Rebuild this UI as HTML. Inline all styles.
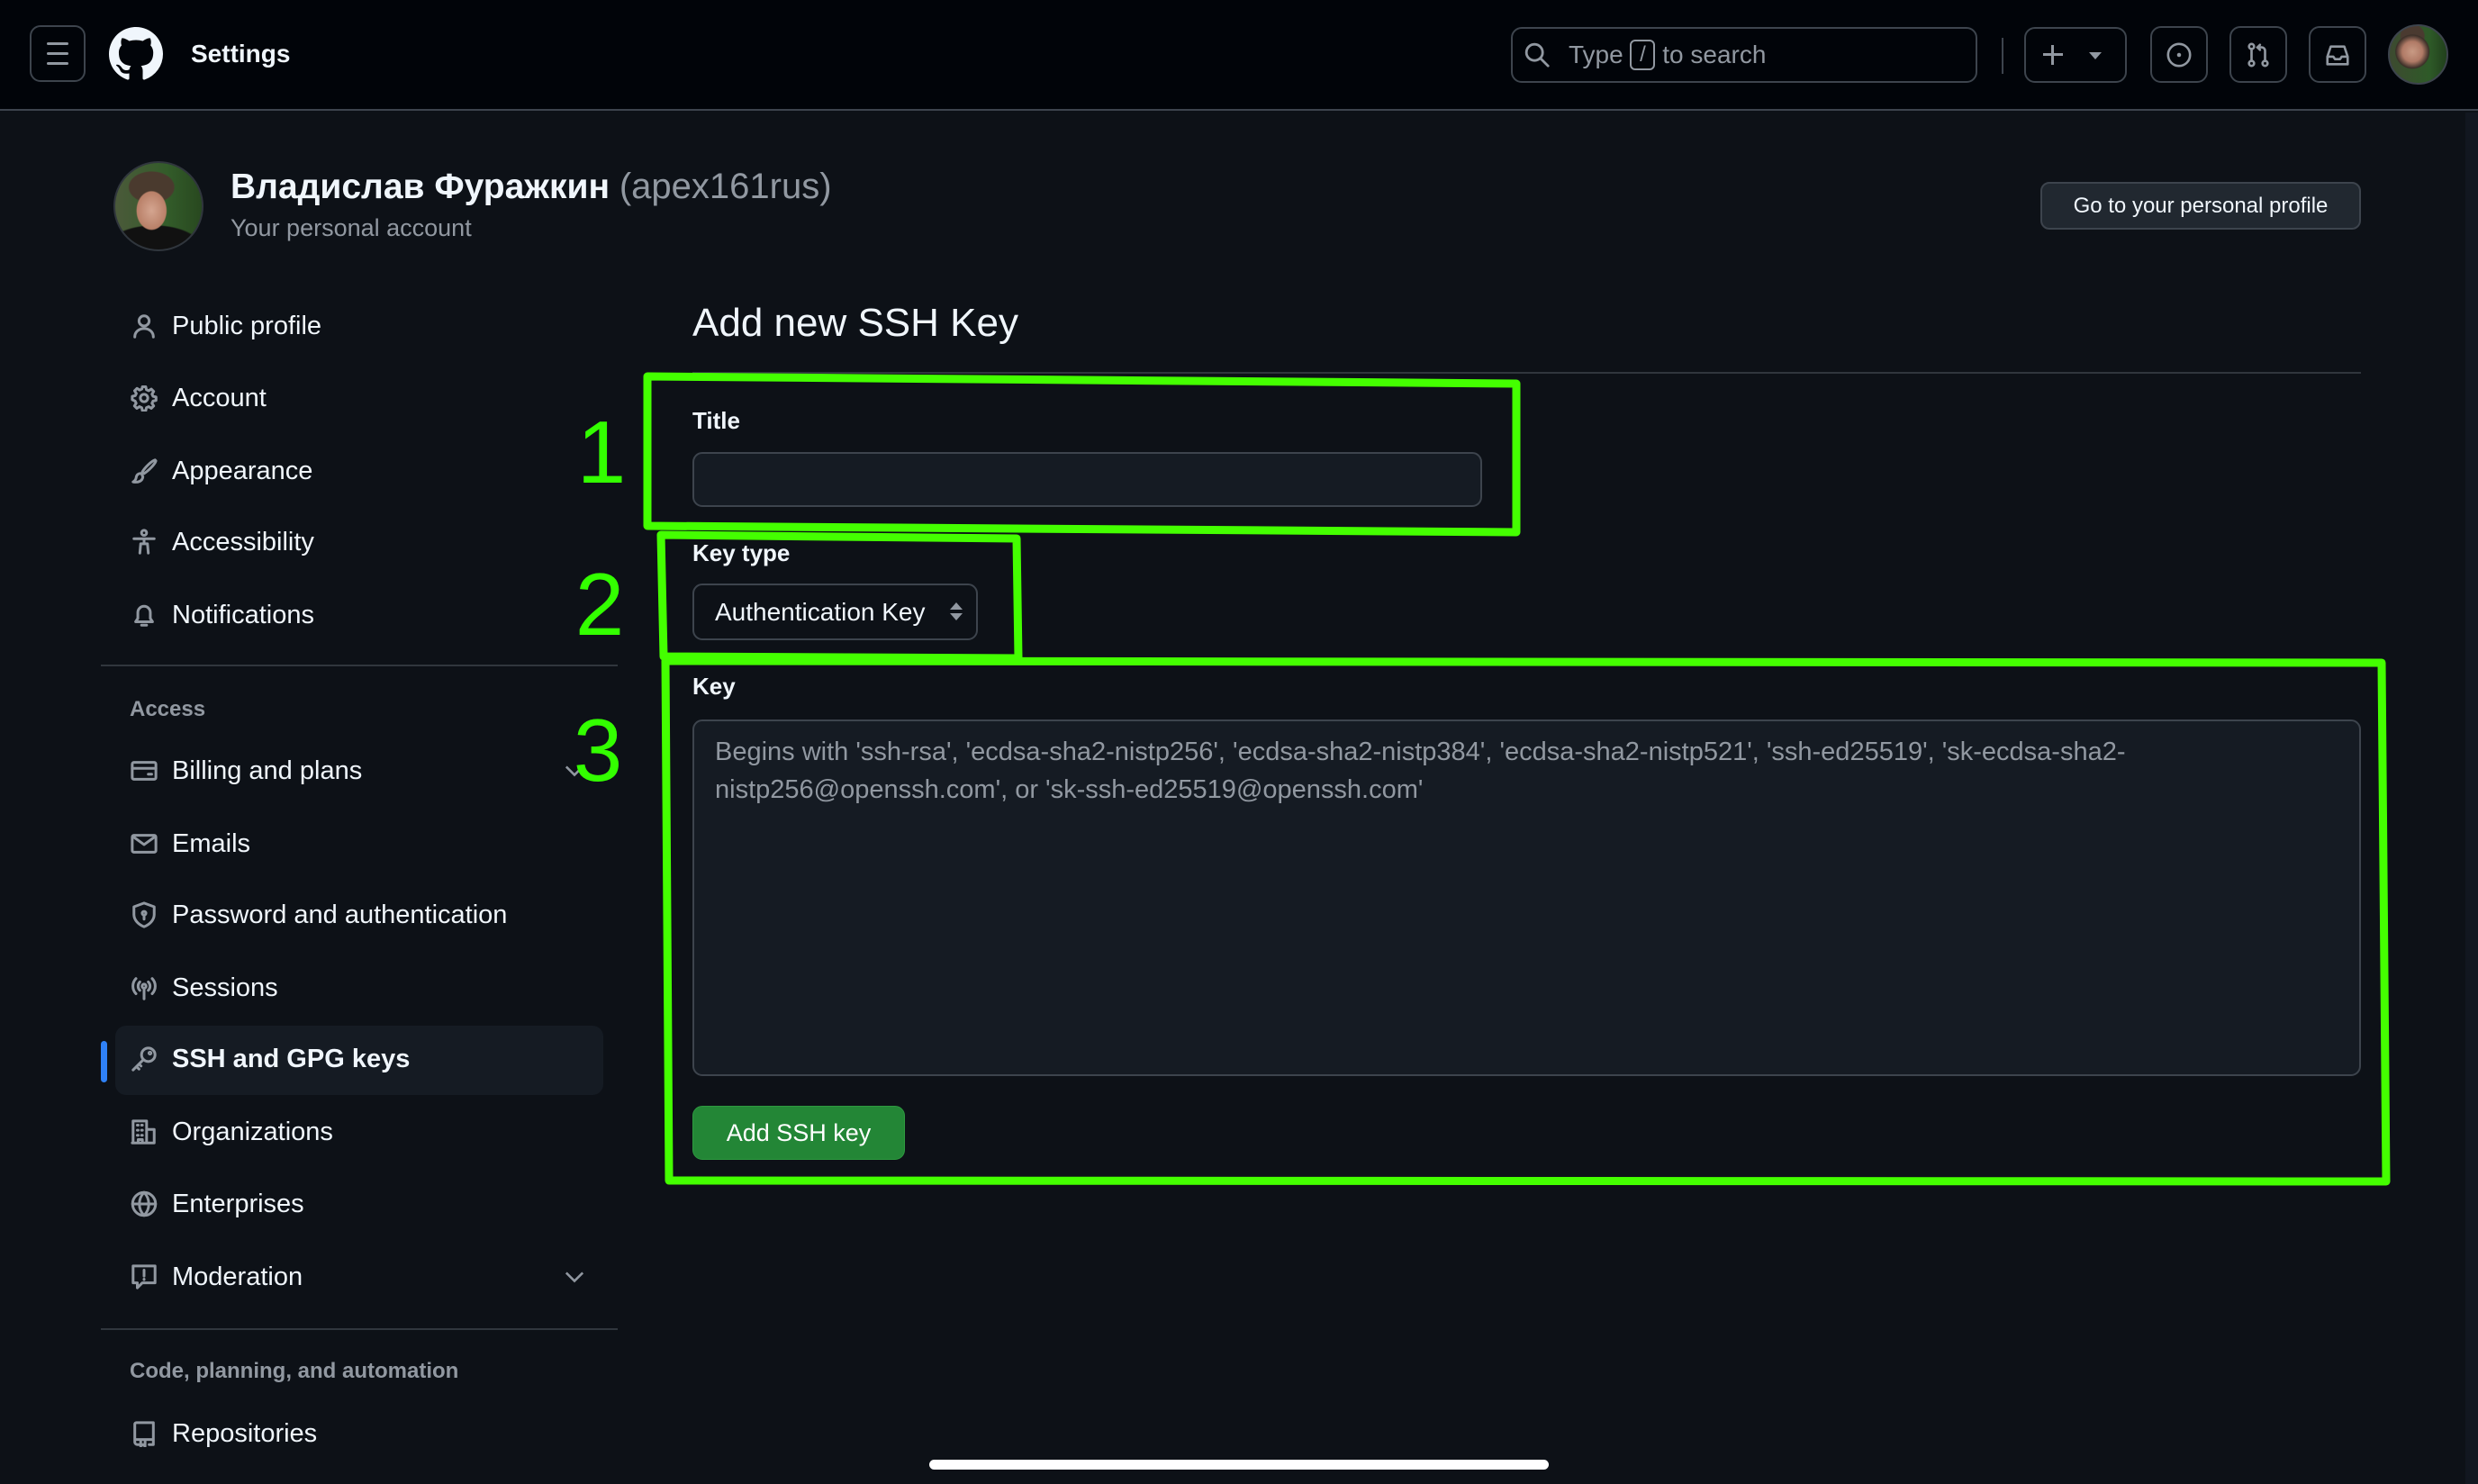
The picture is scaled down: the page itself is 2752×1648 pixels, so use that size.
<!DOCTYPE html>
<html><head><meta charset="utf-8">
<style>
*{margin:0;padding:0;box-sizing:border-box}
body{width:2752px;height:1648px;background:#0d1117;font-family:"Liberation Sans","DejaVu Sans",sans-serif;color:#f0f6fc;position:relative;overflow:hidden}
.a{position:absolute}
.hdr{left:0;top:0;width:2752px;height:123px;background:#010409;border-bottom:2px solid #3d444d}
.btn{border:2px solid #3d444d;border-radius:12px}
.nav{position:absolute;left:191px;height:40px;line-height:40px;font-size:29px;color:#f0f6fc;white-space:nowrap}
.ic{position:absolute;left:145px;width:30px;height:30px}
.ic svg{width:30px;height:30px;fill:none;stroke:#9198a1;stroke-width:1.6;stroke-linecap:round;stroke-linejoin:round}
.lbl{position:absolute;left:769px;font-size:26px;font-weight:bold;height:36px;line-height:36px}
.num{position:absolute;color:#33ff00;font-size:98px;line-height:100px;height:100px;font-family:"Liberation Sans",sans-serif;transform:translate(-50%,-50%)}
</style></head><body>

<div class="a hdr"></div>
<div class="a btn" style="left:33px;top:28px;width:62px;height:63px"></div>
<div class="a" style="left:52px;top:47px;width:24px;height:3px;background:#9198a1;border-radius:2px"></div>
<div class="a" style="left:52px;top:58px;width:24px;height:3px;background:#9198a1;border-radius:2px"></div>
<div class="a" style="left:52px;top:69px;width:24px;height:3px;background:#9198a1;border-radius:2px"></div>
<svg class="a" style="left:121px;top:30px" width="60" height="60" viewBox="0 0 16 16"><path fill="#f0f6fc" d="M8 0C3.58 0 0 3.58 0 8c0 3.540 2.29 6.53 5.470 7.590.4.07.55-.17.55-.38 0-.19-.01-.82-.01-1.49-2.01.37-2.53-.49-2.69-.94-.09-.23-.48-.94-.82-1.13-.28-.15-.68-.52-.01-.53.63-.01 1.080.58 1.230.82.72 1.21 1.870.87 2.330.66.07-.52.28-.87.51-1.07-1.78-.2-3.64-.89-3.64-3.95 0-.87.31-1.59.82-2.15-.08-.2-.36-1.02.08-2.12 0 0 .67-.21 2.2.82.64-.18 1.32-.27 2-.27.68 0 1.360.09 2 .27 1.53-1.04 2.2-.82 2.2-.82.44 1.1.16 1.92.08 2.12.51.56.82 1.27.82 2.15 0 3.07-1.87 3.75-3.65 3.95.29.25.54.73.54 1.48 0 1.07-.01 1.93-.01 2.2 0 .21.15.46.55.38A8.013 8.013 0 0016 8c0-4.42-3.58-8-8-8z"/></svg>
<div class="a" style="left:212px;top:42px;font-size:28px;font-weight:bold;line-height:36px">Settings</div>

<div class="a btn" style="left:1678px;top:30px;width:518px;height:62px"></div>
<svg class="a" style="left:1692px;top:46px" width="30" height="30" viewBox="0 0 16 16"><circle cx="6.5" cy="6.5" r="4.8" fill="none" stroke="#9198a1" stroke-width="1.5"/><path d="M10 10l4.5 4.5" stroke="#9198a1" stroke-width="1.5" stroke-linecap="round"/></svg>
<div class="a" style="left:1742px;top:43px;font-size:28px;color:#9198a1;line-height:36px;white-space:nowrap">Type <span style="display:inline-block;border:2px solid #9198a1;border-radius:6px;width:28px;height:34px;line-height:30px;text-align:center;font-size:24px;vertical-align:middle;margin-top:-4px">/</span> to search</div>
<div class="a" style="left:2223px;top:42px;width:2px;height:40px;background:#3d444d"></div>
<div class="a btn" style="left:2248px;top:30px;width:114px;height:62px"></div>
<div class="a" style="left:2269px;top:59px;width:22px;height:3px;background:#9198a1"></div>
<div class="a" style="left:2278px;top:50px;width:3px;height:22px;background:#9198a1"></div>
<div class="a" style="left:2320px;top:58px;width:0;height:0;border-left:7px solid transparent;border-right:7px solid transparent;border-top:8px solid #9198a1"></div>
<div class="a btn" style="left:2388px;top:29px;width:64px;height:63px"></div>
<svg class="a" style="left:2405px;top:46px" width="30" height="30" viewBox="0 0 16 16"><circle cx="8" cy="8" r="6.5" fill="none" stroke="#9198a1" stroke-width="1.4"/><circle cx="8" cy="8" r="1.2" fill="#9198a1"/></svg>
<div class="a btn" style="left:2476px;top:29px;width:64px;height:63px"></div>
<svg class="a" style="left:2493px;top:46px" width="30" height="30" viewBox="0 0 16 16" fill="none" stroke="#9198a1" stroke-width="1.4" stroke-linecap="round"><circle cx="4" cy="3" r="1.5"/><circle cx="4" cy="13" r="1.5"/><circle cx="12" cy="13" r="1.5"/><path d="M4 4.5v7M12 11.5V5.5a2 2 0 00-2-2H7.5M9 2L7.5 3.5 9 5"/></svg>
<div class="a btn" style="left:2564px;top:29px;width:64px;height:63px"></div>
<svg class="a" style="left:2581px;top:46px" width="30" height="30" viewBox="0 0 16 16" fill="none" stroke="#9198a1" stroke-width="1.4" stroke-linejoin="round"><path d="M2 9l2-6h8l2 6v4.5H2z"/><path d="M2 9h3.5l1 1.5h3l1-1.5H14"/></svg>
<div class="a" style="left:2652px;top:27px;width:67px;height:67px;border-radius:50%;background:radial-gradient(circle at 40% 45%,#c89a84 0,#b07a66 22%,#3a2f28 36%,transparent 38%),radial-gradient(circle at 40% 18%,#4a3a30 0 20%,transparent 22%),linear-gradient(90deg,#3d4a30,#2e5a28 70%,#21401c);border:2px solid #3d444d"></div>
<div class="a" style="left:2738px;top:125px;width:14px;height:1523px;background:#121720"></div>

<div class="a" style="left:126px;top:179px;width:100px;height:100px;border-radius:50%;background:radial-gradient(ellipse 28% 36% at 42% 55%,#d4a590 0,#b98068 60%,transparent 64%),radial-gradient(ellipse 32% 22% at 42% 28%,#4a3a2e 0 80%,transparent 85%),radial-gradient(ellipse 60% 30% at 45% 100%,#111 0 90%,transparent 95%),linear-gradient(90deg,#4b5a3a,#335c2a 60%,#28481f);border:2px solid #30363d"></div>
<div class="a" style="left:256px;top:185px;font-size:39px;font-weight:bold;line-height:44px;white-space:nowrap">Владислав Фуражкин <span style="color:#9198a1;font-weight:normal;font-size:40px">(apex161rus)</span></div>
<div class="a" style="left:256px;top:236px;font-size:27px;color:#9198a1;line-height:34px">Your personal account</div>
<div class="a" style="left:2266px;top:202px;width:356px;height:53px;background:#212830;border:2px solid #3d444d;border-radius:10px;font-size:24px;line-height:49px;text-align:center;color:#f0f6fc">Go to your personal profile</div>

<div class="ic" style="top:347px"><svg viewBox="0 0 16 16"><circle cx="8" cy="5" r="3"/><path d="M2.5 14.5c0-3 2.5-5 5.5-5s5.5 2 5.5 5"/></svg></div>
<div class="nav" style="top:342px">Public profile</div>
<div class="ic" style="top:427px"><svg viewBox="0 0 16 16"><circle cx="8" cy="8" r="2.2"/><path d="M7 1.3h2l.4 1.8 1.3.6 1.6-1 1.4 1.4-1 1.6.6 1.3 1.8.4v2l-1.8.4-.6 1.3 1 1.6-1.4 1.4-1.6-1-1.3.6-.4 1.8H7l-.4-1.8-1.3-.6-1.6 1-1.4-1.4 1-1.6-.6-1.3L1 9V7l1.8-.4.6-1.3-1-1.6 1.4-1.4 1.6 1 1.3-.6z"/></svg></div>
<div class="nav" style="top:422px">Account</div>
<div class="ic" style="top:508px"><svg viewBox="0 0 16 16"><path d="M14.5 1.5c-2 .5-6 4.5-7.5 7l1 1c2.5-1.5 6.5-5.5 7-7.5z"/><path d="M6.5 9.5c-1.8-.3-3 .8-3.2 2.5-.1 1-.8 1.8-1.8 2.5 3 .5 5.5-.5 5.8-3z"/></svg></div>
<div class="nav" style="top:503px">Appearance</div>
<div class="ic" style="top:587px"><svg viewBox="0 0 16 16"><circle cx="8" cy="2.5" r="1.5"/><path d="M2 6h12M8 6v3M5.5 14.5L6 9h4l.5 5.5"/></svg></div>
<div class="nav" style="top:582px">Accessibility</div>
<div class="ic" style="top:668px"><svg viewBox="0 0 16 16"><path d="M3 12h10l-1.3-2V6.5a3.7 3.7 0 00-7.4 0V10z"/><path d="M6.5 14h3"/></svg></div>
<div class="nav" style="top:663px">Notifications</div>

<div class="a" style="left:112px;top:738px;width:574px;height:2px;background:#30363d"></div>
<div class="a" style="left:144px;top:772px;font-size:24px;font-weight:bold;color:#9198a1;line-height:32px">Access</div>

<div class="ic" style="top:841px"><svg viewBox="0 0 16 16"><rect x="1" y="3" width="14" height="10" rx="1"/><path d="M1 6.5h14M10.5 10h2"/></svg></div>
<div class="nav" style="top:836px">Billing and plans</div>
<svg class="a" style="left:627px;top:848px" width="22" height="16" viewBox="0 0 12 8"><path d="M1 1.5l5 5 5-5" fill="none" stroke="#9198a1" stroke-width="1.4"/></svg>
<div class="ic" style="top:922px"><svg viewBox="0 0 16 16"><rect x="1" y="3" width="14" height="10" rx="1"/><path d="M1.5 3.8L8 8.5l6.5-4.7"/></svg></div>
<div class="nav" style="top:917px">Emails</div>
<div class="ic" style="top:1001px"><svg viewBox="0 0 16 16"><path d="M8 1l6 2.2v4.5c0 3.5-2.8 6-6 7.3-3.2-1.3-6-3.8-6-7.3V3.2z"/><circle cx="8" cy="7" r="1.1"/><path d="M8 8v2.5"/></svg></div>
<div class="nav" style="top:996px">Password and authentication</div>
<div class="ic" style="top:1082px"><svg viewBox="0 0 16 16"><circle cx="8" cy="7" r="1.2"/><path d="M8 8.5v6M5.5 4.5a3.5 3.5 0 000 5M10.5 4.5a3.5 3.5 0 010 5M3.2 2.5a6.5 6.5 0 000 9M12.8 2.5a6.5 6.5 0 010 9"/></svg></div>
<div class="nav" style="top:1077px">Sessions</div>

<div class="a" style="left:128px;top:1139px;width:542px;height:77px;background:#151b23;border-radius:12px"></div>
<div class="a" style="left:112px;top:1156px;width:7px;height:46px;background:#2f81f7;border-radius:4px"></div>
<div class="ic" style="top:1161px"><svg viewBox="0 0 16 16"><circle cx="10.5" cy="5.5" r="4"/><path d="M7.6 8.4L1.5 14.5M3.5 12.5l1.5 1.5M5 11l1.2 1.2"/><circle cx="11.5" cy="4.5" r=".6"/></svg></div>
<div class="nav" style="top:1156px;font-weight:bold">SSH and GPG keys</div>

<div class="ic" style="top:1242px"><svg viewBox="0 0 16 16"><path d="M1.5 14.5V1.5h8v13M9.5 6.5h4.5v8H1M4 4h.5M6.5 4h.5M4 7h.5M6.5 7h.5M4 10h.5M6.5 10h.5M4.5 14.5v-2h2.5v2"/></svg></div>
<div class="nav" style="top:1237px">Organizations</div>
<div class="ic" style="top:1322px"><svg viewBox="0 0 16 16"><circle cx="8" cy="8" r="6.8"/><path d="M1.2 8h13.6M8 1.2c-2 2-2.8 4.2-2.8 6.8s.8 4.8 2.8 6.8M8 1.2c2 2 2.8 4.2 2.8 6.8s-.8 4.8-2.8 6.8"/></svg></div>
<div class="nav" style="top:1317px">Enterprises</div>
<div class="ic" style="top:1403px"><svg viewBox="0 0 16 16"><path d="M1.5 1.5h13v10H7l-3 3v-3H1.5z"/><path d="M8 4v3.5M8 9.3v.3"/></svg></div>
<div class="nav" style="top:1398px">Moderation</div>
<svg class="a" style="left:627px;top:1410px" width="22" height="16" viewBox="0 0 12 8"><path d="M1 1.5l5 5 5-5" fill="none" stroke="#9198a1" stroke-width="1.4"/></svg>

<div class="a" style="left:112px;top:1475px;width:574px;height:2px;background:#30363d"></div>
<div class="a" style="left:144px;top:1507px;font-size:24px;font-weight:bold;color:#9198a1;line-height:32px;white-space:nowrap">Code, planning, and automation</div>
<div class="ic" style="top:1577px"><svg viewBox="0 0 16 16"><path d="M2.5 13V2.5a1 1 0 011-1h10v10h-11M2.5 13a1.5 1.5 0 001.5 1.5h1M11 14.5h2.5V11.5M6 12.5v3l1.3-1 1.3 1v-3"/></svg></div>
<div class="nav" style="top:1572px">Repositories</div>

<div class="a" style="left:769px;top:333px;font-size:44px;line-height:52px;white-space:nowrap">Add new SSH Key</div>
<div class="a" style="left:769px;top:413px;width:1853px;height:2px;background:#30363d"></div>

<div class="lbl" style="top:449px">Title</div>
<div class="a" style="left:769px;top:502px;width:877px;height:61px;background:#151b23;border:2px solid #3d444d;border-radius:11px"></div>

<div class="lbl" style="top:596px">Key type</div>
<div class="a" style="left:769px;top:648px;width:317px;height:63px;border:2px solid #3d444d;border-radius:11px"></div>
<div class="a" style="left:794px;top:662px;font-size:28px;line-height:36px;white-space:nowrap">Authentication Key</div>
<div class="a" style="left:1055px;top:669px;width:0;height:0;border-left:7px solid transparent;border-right:7px solid transparent;border-bottom:8px solid #9198a1"></div>
<div class="a" style="left:1055px;top:681px;width:0;height:0;border-left:7px solid transparent;border-right:7px solid transparent;border-top:8px solid #9198a1"></div>

<div class="lbl" style="top:744px">Key</div>
<div class="a" style="left:769px;top:799px;width:1853px;height:396px;background:#151b23;border:2px solid #3d444d;border-radius:11px"></div>
<div class="a" style="left:794px;top:814px;font-size:29px;line-height:42px;color:#9198a1;white-space:pre">Begins with 'ssh-rsa', 'ecdsa-sha2-nistp256', 'ecdsa-sha2-nistp384', 'ecdsa-sha2-nistp521', 'ssh-ed25519', 'sk-ecdsa-sha2-
nistp256@openssh.com', or 'sk-ssh-ed25519@openssh.com'</div>

<div class="a" style="left:769px;top:1228px;width:236px;height:60px;background:#238636;border:1px solid #2e9a40;border-radius:11px;font-size:27px;line-height:58px;text-align:center;color:#fff">Add SSH key</div>

<svg class="a" style="left:0;top:0" width="2752" height="1648">
<g fill="none" stroke="#44ff00" stroke-width="9" stroke-linejoin="round">
<polygon points="719,418 1684,426 1684,591 719,584"/>
<polygon points="734,594 1129,598 1131,731 737,729"/>
<polygon points="739,734 2645,736 2650,1312 743,1311"/>
</g></svg>
<div class="num" style="left:668px;top:502px">1</div>
<div class="num" style="left:666px;top:671px">2</div>
<div class="num" style="left:664px;top:833px">3</div>

<div class="a" style="left:1032px;top:1621px;width:688px;height:11px;background:#fff;border-radius:6px"></div>
</body></html>
